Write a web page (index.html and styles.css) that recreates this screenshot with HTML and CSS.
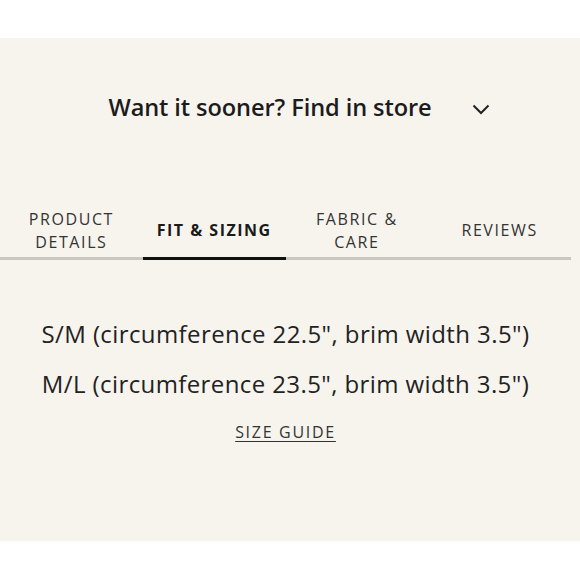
FILE: index.html
```html
<!DOCTYPE html>
<html>
<head>
<meta charset="utf-8">
<link rel="stylesheet" href="styles.css">
</head>
<body>
<div class="panel">
  <div class="store">
    <span class="store-text">Want it sooner? Find in store</span>
    <svg class="chev" width="18" height="11" viewBox="0 0 18 11"><path d="M1.5 1.5 L9 9 L16.5 1.5" fill="none" stroke="#222" stroke-width="2"/></svg>
  </div>
  <div class="tabs">
    <div class="tab">PRODUCT<br>DETAILS</div>
    <div class="tab active">FIT &amp; SIZING</div>
    <div class="tab">FABRIC &amp;<br>CARE</div>
    <div class="tab">REVIEWS</div>
  </div>
  <div class="content">
    <p class="size">S/M (circumference 22.5", brim width 3.5")</p>
    <p class="size">M/L (circumference 23.5", brim width 3.5")</p>
    <a class="guide">SIZE GUIDE</a>
  </div>
</div>
</body>
</html>
```
FILE: styles.css
```css
html, body { margin: 0; padding: 0; background: #ffffff; }
body { font-family: "Open Sans", "Liberation Sans", sans-serif; color: #222; }
.panel {
  margin-top: 38px;
  height: 503px;
  background: #f7f4ee;
  display: flex;
  flex-direction: column;
}
.store {
  display: flex;
  align-items: center;
  justify-content: center;
  padding-top: 52px;
  height: 34px;
  padding-left: 18px;
}
.store-text {
  font-size: 23.6px;
  font-weight: 600;
  letter-spacing: -0.1px;
  color: #1c1c1c;
}
.chev { margin-left: 40px; margin-top: 4px; }
.tabs {
  margin-top: 80px;
  width: 571px;
  display: grid;
  grid-template-columns: repeat(4, 1fr);
  border-bottom: 3px solid #c9c7c2;
  height: 56px;
  box-sizing: border-box;
}
.tab {
  position: relative;
  display: flex;
  align-items: center;
  justify-content: center;
  text-align: center;
  font-size: 16px;
  letter-spacing: 1.6px;
  line-height: 23px;
  color: #333;
  padding-bottom: 0;
}
.tab.active { font-weight: 700; color: #1a1a1a; letter-spacing: 1.5px; }
.tab.active::after {
  content: "";
  position: absolute;
  left: 0; right: 0; bottom: -3px;
  height: 3px;
  background: #111;
}
.content {
  width: 571px;
  text-align: center;
  padding-top: 61px;
}
.size {
  margin: 0 0 24px;
  font-size: 24px;
  line-height: 26px;
  letter-spacing: 0.4px;
}
.guide {
  display: inline-block;
  font-size: 16px;
  letter-spacing: 1.7px;
  text-decoration: underline;
  text-underline-offset: 3px;
  color: #333;
}
```
